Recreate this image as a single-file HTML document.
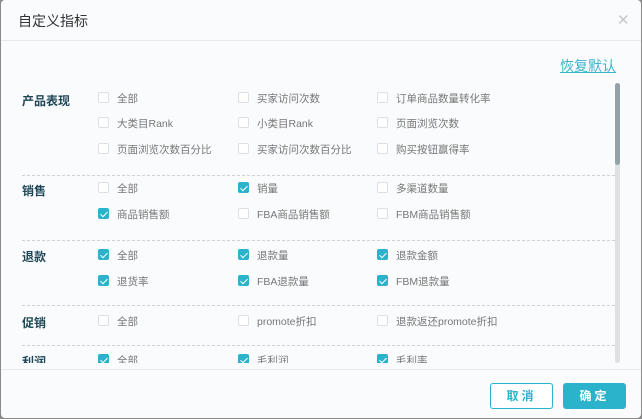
<!DOCTYPE html><html><head><meta charset="utf-8"><style>
*{margin:0;padding:0;box-sizing:border-box}
html,body{width:642px;height:419px;overflow:hidden}
body{background:#8a8a8a;font-family:"Liberation Sans","Noto Sans CJK SC",sans-serif;position:relative}
.dlg{position:absolute;left:1px;top:0;width:640px;height:418px;background:#fafbfc;border-radius:4px;overflow:hidden}
.t{position:absolute;left:17px;top:11px;font-size:14px;color:#333}
.x{position:absolute;left:616px;top:11px;font-size:15px;color:#c8c8c8}
.hl{position:absolute;left:0;top:40px;width:640px;height:1px;background:#e6e8ea}
.rd{position:absolute;left:559px;top:56px;font-size:14px;color:#3ab6cc;text-decoration:underline}
.lab{position:absolute;left:21px;font-size:12px;font-weight:bold;color:#1f4656}
.cb{position:absolute;width:11px;height:11px;border:1px solid #dcdfe3;background:#fff;border-radius:2px}
.cb.on{background:#2cb3cc;border-color:#2cb3cc}
.cb.on:after{content:"";position:absolute;left:3px;top:1px;width:3px;height:6px;border:solid #fff;border-width:0 1.2px 1.2px 0;transform:rotate(45deg)}
.it{position:absolute;font-size:10.5px;color:#777;white-space:nowrap}
.dl{position:absolute;left:21px;width:593px;border-top:1px dashed #cfd3d6}
.sc{position:absolute;left:614px;top:83px;width:5px;height:280px;background:#dde1e3;border-radius:3px}
.th{position:absolute;left:614px;top:83px;width:5px;height:82px;background:#95a2a8;border-radius:3px}
.clip{position:absolute;left:0;top:83px;width:614px;height:280px;overflow:hidden}
.fl{position:absolute;left:0;top:369px;width:640px;height:1px;background:#e6e8ea}
.b{position:absolute;top:383px;width:63px;height:26px;border-radius:3px;font-size:12px;text-align:center;line-height:24px;letter-spacing:3px;font-weight:bold}
</style></head><body><div class="dlg">
<div class="t">自定义指标</div><div class="x">✕</div><div class="hl"></div>
<div class="rd">恢复默认</div>
<div class="sc"></div><div class="th"></div>
<div class="clip" id="c"></div>
<div class="fl"></div>
<div class="b" style="left:489px;border:1px solid #2cb3cc;color:#2cb3cc;background:#fff">取消</div>
<div class="b" style="left:562px;background:#2cb3cc;color:#fff;border:1px solid #2cb3cc">确定</div>
</div>
<script>
var c=document.getElementById('c'),h='';
var X=[97,237,376];
var data=[
['产品表现',100,[[98,[['全部',0],['买家访问次数',0],['订单商品数量转化率',0]]],[123,[['大类目Rank',0],['小类目Rank',0],['页面浏览次数',0]]],[149,[['页面浏览次数百分比',0],['买家访问次数百分比',0],['购买按钮赢得率',0]]]],175],
['销售',190,[[188,[['全部',0],['销量',1],['多渠道数量',0]]],[214,[['商品销售额',1],['FBA商品销售额',0],['FBM商品销售额',0]]]],240],
['退款',256,[[255,[['全部',1],['退款量',1],['退款金额',1]]],[281,[['退货率',1],['FBA退款量',1],['FBM退款量',1]]]],305],
['促销',322,[[321,[['全部',0],['promote折扣',0],['退款返还promote折扣',0]]]],345],
['利润',361,[[360,[['全部',1],['毛利润',1],['毛利率',1]]]],999]];
data.forEach(function(s){
h+='<div class="lab" style="top:'+(s[1]-83-8)+'px">'+s[0]+'</div>';
s[2].forEach(function(r){r[1].forEach(function(it,i){
h+='<div class="cb'+(it[1]?' on':'')+'" style="left:'+X[i]+'px;top:'+(r[0]-83-6)+'px"></div>';
h+='<div class="it" style="left:'+(X[i]+19)+'px;top:'+(r[0]-83-7)+'px">'+it[0]+'</div>';});});
if(s[3]<900)h+='<div class="dl" style="top:'+(s[3]-83)+'px"></div>';});
c.innerHTML=h;
</script></body></html>
